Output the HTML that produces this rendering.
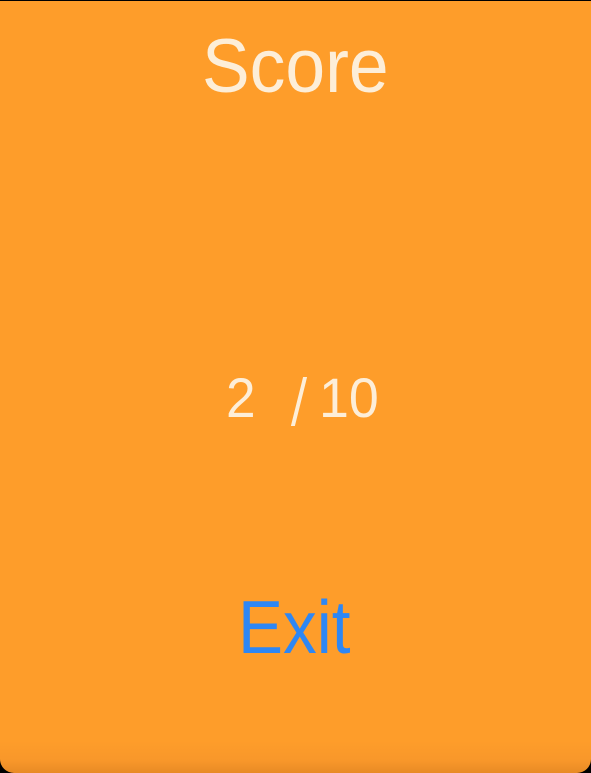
<!DOCTYPE html>
<html><head><style>
html,body{margin:0;padding:0;background:#000;}
.p{position:relative;width:591px;height:773px;overflow:hidden;background:#000;}
.bg{position:absolute;left:0;top:1px;width:591px;height:772px;border-radius:0 0 14px 14px;
background:linear-gradient(to bottom,#fe9d2a 0,#fe9d2a 740px,#f8972a 760px,#e88a25 772px);}
.t{position:absolute;font-family:"Liberation Sans",sans-serif;white-space:nowrap;line-height:1;transform-origin:left top;}
</style></head><body><div class="p"><div class="bg"></div>
<div class="t" style="left:202px;top:29px;font-size:76px;color:#fdeed8;transform:scaleX(0.94)">Score</div>
<div class="t" style="left:226px;top:370px;font-size:56px;color:#fdeed8;transform:scaleX(0.95)">2</div>
<div style="position:absolute;left:297px;top:377px;width:3.5px;height:49px;background:#fdeed8;transform:skewX(-14deg);"></div>
<div class="t" style="left:319px;top:370px;font-size:56px;color:#fdeed8;transform:scaleX(0.96)">10</div>
<div class="t" style="left:238px;top:590px;font-size:75px;color:#2e87f4;transform:scaleX(0.9)">Exit</div>
</div></body></html>
